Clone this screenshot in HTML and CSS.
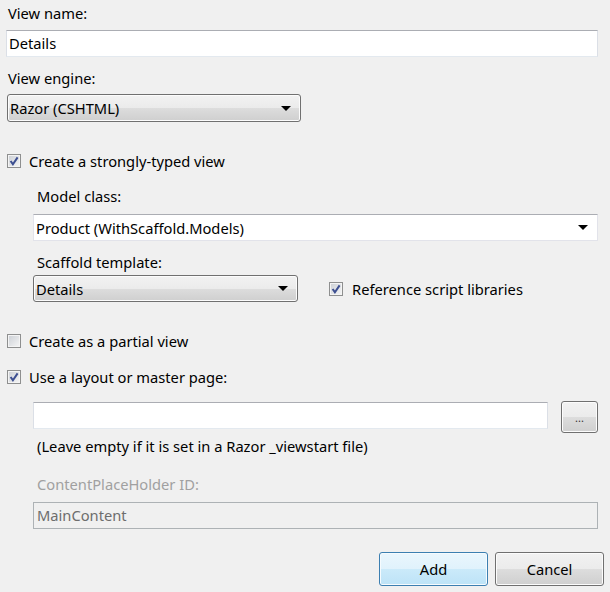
FILE: index.html
```html
<!DOCTYPE html>
<html>
<head>
<meta charset="utf-8">
<link rel="stylesheet" href="styles.css">
</head>
<body>
<div class="dialog">
  <div class="label lbl-first">View name:</div>
  <div class="textbox tb-full">Details</div>

  <div class="label lbl-engine">View engine:</div>
  <div class="dropdown dd-engine"><span>Razor (CSHTML)</span><span class="arrow"></span></div>

  <div class="check-row cr-typed">
    <span class="cb checked"><svg viewBox="0 0 14 14" width="14" height="14"><path d="M3.6 7.0 L5.9 10.2 L10.6 3.4" fill="none" stroke="#3d4f91" stroke-width="2"/></svg></span>
    <span>Create a strongly-typed view</span>
  </div>

  <div class="indent">
    <div class="label lbl-model">Model class:</div>
    <div class="combo"><span>Product (WithScaffold.Models)</span><span class="arrow"></span></div>

    <div class="label lbl-scaffold">Scaffold template:</div>
    <div class="scaffold-row">
      <div class="dropdown dd-scaffold"><span>Details</span><span class="arrow"></span></div>
      <div class="check-row cr-ref">
        <span class="cb checked"><svg viewBox="0 0 14 14" width="14" height="14"><path d="M3.6 7.0 L5.9 10.2 L10.6 3.4" fill="none" stroke="#3d4f91" stroke-width="2"/></svg></span>
        <span>Reference script libraries</span>
      </div>
    </div>
  </div>

  <div class="check-row cr-partial">
    <span class="cb"></span>
    <span>Create as a partial view</span>
  </div>

  <div class="check-row cr-layout">
    <span class="cb checked"><svg viewBox="0 0 14 14" width="14" height="14"><path d="M3.6 7.0 L5.9 10.2 L10.6 3.4" fill="none" stroke="#3d4f91" stroke-width="2"/></svg></span>
    <span>Use a layout or master page:</span>
  </div>

  <div class="indent">
    <div class="layout-row">
      <div class="textbox tb-layout"></div>
      <div class="btn btn-browse">...</div>
    </div>
    <div class="label lbl-hint">(Leave empty if it is set in a Razor _viewstart file)</div>
    <div class="label lbl-disabled">ContentPlaceHolder ID:</div>
    <div class="textbox-disabled">MainContent</div>
  </div>

  <div class="buttons">
    <div class="btn btn-add">Add</div>
    <div class="btn btn-cancel">Cancel</div>
  </div>
</div>
</body>
</html>
```

FILE: styles.css
```css
html, body {
  margin: 0;
  padding: 0;
  background: #f0f0f0;
}
body {
  font-family: "Noto Sans", "Open Sans", sans-serif;
  font-size: 14.7px;
  color: #000;
}
.dialog {
  padding: 2px 6px 0 6px;
  width: 604px;
  box-sizing: border-box;
}
.label {
  height: 22px;
  line-height: 22px;
  white-space: nowrap;
}
.lbl-first { padding-left: 2px; }
.lbl-engine { margin-top: 10px; padding-left: 2px; }
.textbox {
  box-sizing: border-box;
  height: 27px;
  background: #fff;
  border: 1px solid #e2e3ea;
  border-top-color: #abadb3;
  border-left-color: #dbdfe6;
  border-right-color: #dbdfe6;
  border-bottom-color: #e3e9ef;
  line-height: 25px;
  padding-left: 2px;
}
.tb-full { margin-top: 6px; width: 592px; }
.dropdown {
  box-sizing: border-box;
  height: 28px;
  border: 1px solid #707070;
  border-radius: 3px;
  box-shadow: inset 0 0 0 1px #fcfcfc;
  background: linear-gradient(#f2f2f2 0%, #ebebeb 50%, #dddddd 50%, #cfcfcf 100%);
  display: flex;
  align-items: center;
  justify-content: space-between;
  padding: 0 9px 0 2px;
}
.arrow {
  width: 0;
  height: 0;
  border-left: 5px solid transparent;
  border-right: 5px solid transparent;
  border-top: 5px solid #000;
}
.dd-engine { margin-top: 5px; margin-left: 1px; width: 294px; }
.check-row {
  display: flex;
  align-items: center;
  height: 22px;
  gap: 8px;
  white-space: nowrap;
}
.cb {
  box-sizing: border-box;
  width: 14px;
  height: 14px;
  border: 1px solid #8e8f8f;
  box-shadow: inset 0 0 0 1px #f4f4f4;
  background: linear-gradient(135deg, #cbcfd5, #f6f6f6);
  position: relative;
  flex: none;
}
.cb svg {
  position: absolute;
  left: -1px;
  top: -1px;
}
.cr-typed { margin-top: 28px; padding-left: 1px; }
.indent { padding-left: 27px; }
.lbl-model { margin-top: 13px; padding-left: 4px; }
.combo {
  box-sizing: border-box;
  margin-top: 7px;
  height: 27px;
  width: 565px;
  background: #fff;
  border: 1px solid #e2e3ea;
  border-top-color: #abadb3;
  display: flex;
  align-items: center;
  justify-content: space-between;
  padding: 0 9px 0 2px;
}
.lbl-scaffold { margin-top: 10px; padding-left: 4px; }
.scaffold-row {
  margin-top: 2px;
  display: flex;
  align-items: center;
  gap: 31px;
}
.dd-scaffold { width: 265px; height: 27px; }
.cr-ref { gap: 9px; }
.cr-partial { margin-top: 28px; padding-left: 1px; }
.cr-layout { margin-top: 14px; padding-left: 1px; }
.layout-row {
  margin-top: 13px;
  display: flex;
  align-items: flex-start;
  gap: 13px;
}
.tb-layout { width: 515px; margin-top: 1px; flex: none; }
.btn {
  box-sizing: border-box;
  border: 1px solid #707070;
  border-radius: 3px;
  box-shadow: inset 0 0 0 1px #fcfcfc;
  background: linear-gradient(#f2f2f2 0%, #ebebeb 50%, #dddddd 50%, #cfcfcf 100%);
  display: flex;
  align-items: center;
  justify-content: center;
}
.btn-browse {
  width: 37px;
  height: 32px;
  font-size: 11px;
  color: #333;
  flex: none;
}
.lbl-hint { margin-top: 2px; padding-left: 4px; }
.lbl-disabled { margin-top: 16px; padding-left: 4px; color: #a0a0a0; }
.textbox-disabled {
  box-sizing: border-box;
  margin-top: 7px;
  height: 27px;
  width: 565px;
  border: 1px solid #adb2b5;
  background: #f0f0f0;
  color: #6d6d6d;
  line-height: 25px;
  padding-left: 3px;
}
.buttons {
  margin-top: 23px;
  display: flex;
  justify-content: flex-end;
  gap: 7px;
  margin-right: -6px;
}
.btn-add, .btn-cancel {
  width: 109px;
  height: 34px;
}
.btn-add {
  border-color: #3c7fb1;
  box-shadow: inset 0 0 0 1px #f6fbfe;
  background: linear-gradient(#eaf6fd 0%, #e0f2fc 50%, #cbeafa 50%, #bde3f7 100%);
}
```
